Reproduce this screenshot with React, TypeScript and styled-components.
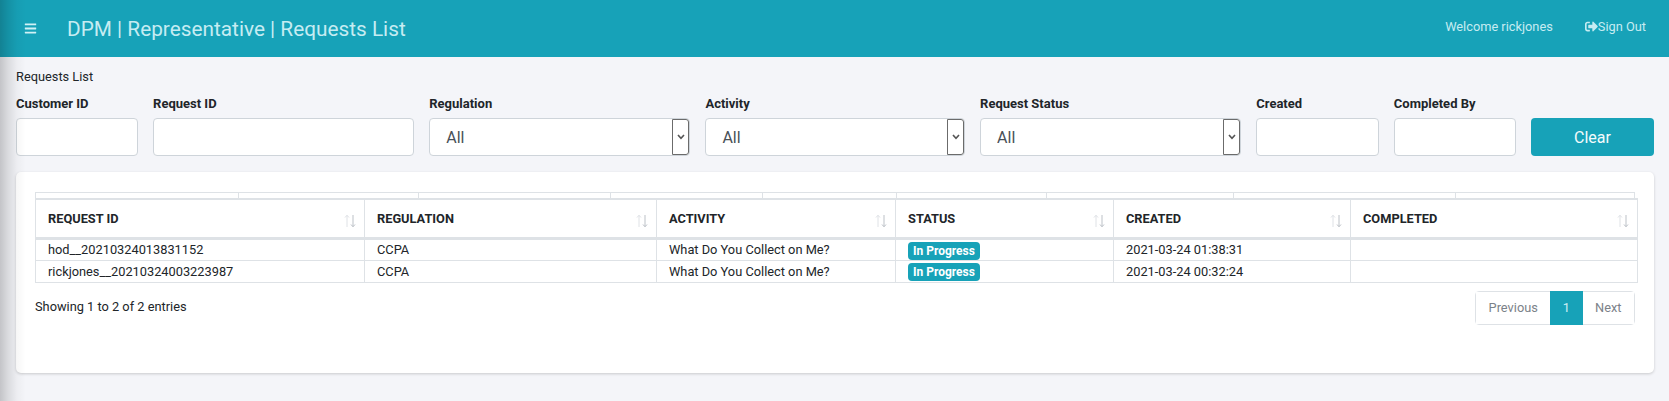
import React from 'react';
import styled, { createGlobalStyle } from 'styled-components';
import { FaBars, FaSignOutAlt } from 'react-icons/fa';

const columns = [
  { title: 'Request ID', width: 329 },
  { title: 'Regulation', width: 292 },
  { title: 'Activity', width: 239 },
  { title: 'Status', width: 218 },
  { title: 'Created', width: 237 },
  { title: 'Completed', width: 287 },
];

const rows = [
  { id: 'hod__20210324013831152', regulation: 'CCPA', activity: 'What Do You Collect on Me?', status: 'In Progress', created: '2021-03-24 01:38:31' },
  { id: 'rickjones__20210324003223987', regulation: 'CCPA', activity: 'What Do You Collect on Me?', status: 'In Progress', created: '2021-03-24 00:32:24' },
];

const GlobalStyle = createGlobalStyle`
  html, body {
    margin: 0;
    padding: 0;
    background: #f4f5f9;
    font-family: Roboto, "Liberation Sans", sans-serif;
    color: #212529;
  }
`;

const SortIcon = () => (
  <SortSvg width="12" height="14" viewBox="0 0 12 14" fill="none">
    <path d="M3 13V1.5M1 3.5 3 1.2l2 2.3" stroke="#dfe2e6" strokeWidth="1" />
    <path d="M9 1v11.5M7 10.5l2 2.3 2-2.3" stroke="#bcc1c7" strokeWidth="1" />
  </SortSvg>
);

const Field: React.FC<{ label: string; options?: boolean }> = ({ label, options }) => (
  <FieldBox>
    <FieldLabel>{label}</FieldLabel>
    {options ? (
      <SelectWrap>
        <Select defaultValue="All">
          <option>All</option>
        </Select>
        <SelectArrow>
          <svg width="8" height="6" viewBox="0 0 8 6" fill="none">
            <path d="M1 1l3 3.4L7 1" stroke="#555" strokeWidth="1.6" />
          </svg>
        </SelectArrow>
      </SelectWrap>
    ) : (
      <Input />
    )}
  </FieldBox>
);

const App: React.FC = () => {
  return (
    <Page>
      <GlobalStyle />
      <Header>
        <HeaderLeft>
          <MenuButton>
            <FaBars size={13} />
          </MenuButton>
          <Title>DPM | Representative | Requests List</Title>
        </HeaderLeft>
        <HeaderRight>
          <span>Welcome rickjones</span>
          <SignOut>
            <FaSignOutAlt size={13} />
            Sign Out
          </SignOut>
        </HeaderRight>
      </Header>

      <Main>
        <PageLabel>Requests List</PageLabel>
        <Filters>
          <Field label="Customer ID" />
          <Field label="Request ID" />
          <Field label="Regulation" options />
          <Field label="Activity" options />
          <Field label="Request Status" options />
          <Field label="Created" />
          <Field label="Completed By" />
          <ClearButton>Clear</ClearButton>
        </Filters>

        <Card>
          <GhostRow>
            {Array.from({ length: 9 }).map((_, i) => (
              <GhostCell key={i} />
            ))}
          </GhostRow>
          <Table>
            <colgroup>
              {columns.map((c) => (
                <col key={c.title} style={{ width: c.width }} />
              ))}
            </colgroup>
            <thead>
              <tr>
                {columns.map((c) => (
                  <Th key={c.title}>
                    {c.title}
                    <SortIcon />
                  </Th>
                ))}
              </tr>
            </thead>
            <tbody>
              {rows.map((r) => (
                <tr key={r.id}>
                  <Td>{r.id}</Td>
                  <Td>{r.regulation}</Td>
                  <Td>{r.activity}</Td>
                  <Td>
                    <Badge>{r.status}</Badge>
                  </Td>
                  <Td>{r.created}</Td>
                  <Td />
                </tr>
              ))}
            </tbody>
          </Table>
          <TableFooter>
            <Info>Showing 1 to 2 of 2 entries</Info>
            <Pagination>
              <PageLink>Previous</PageLink>
              <PageLink $active>1</PageLink>
              <PageLink>Next</PageLink>
            </Pagination>
          </TableFooter>
        </Card>
      </Main>
    </Page>
  );
};

export default App;

const Page = styled.div`
  position: relative;
  height: 401px;
  overflow: hidden;

  /* shadow of the collapsed sidebar */
  &::after {
    content: '';
    position: absolute;
    top: 0;
    bottom: 0;
    left: 0;
    width: 26px;
    background: linear-gradient(
      to right,
      rgba(0, 0, 0, 0.2),
      rgba(0, 0, 0, 0.11) 30%,
      rgba(0, 0, 0, 0.03) 65%,
      rgba(0, 0, 0, 0)
    );
    pointer-events: none;
  }
`;

const Header = styled.header`
  height: 57px;
  background: #17a2b8;
  display: flex;
  align-items: center;
  justify-content: space-between;
  padding: 0 23px 0 24px;
  box-sizing: border-box;
`;

const HeaderLeft = styled.div`
  display: flex;
  align-items: center;
`;

const MenuButton = styled.div`
  width: 43px;
  display: flex;
  align-items: center;
  color: #d1f1f5;
`;

const Title = styled.h1`
  margin: 0;
  font-size: 20.8px;
  font-weight: 400;
  color: #c6ecf2;
`;

const HeaderRight = styled.div`
  display: flex;
  align-items: center;
  gap: 32px;
  font-size: 12.8px;
  color: #c6ecf2;
  margin-bottom: 4px;
`;

const SignOut = styled.span`
  display: flex;
  align-items: center;
`;

const Main = styled.main`
  padding: 12px 15px 0 16px;
`;

const PageLabel = styled.div`
  font-size: 12.8px;
  line-height: 16px;
  margin-bottom: 11px;
`;

const Filters = styled.div`
  display: grid;
  grid-template-columns: 122fr 261fr 261fr 259.5fr 261fr 122.5fr 122fr 123fr;
  column-gap: 15px;
  align-items: end;
`;

const FieldBox = styled.div`
  display: flex;
  flex-direction: column;
`;

const FieldLabel = styled.label`
  font-size: 13px;
  font-weight: 700;
  line-height: 16px;
  margin-bottom: 6px;
`;

const Input = styled.input`
  height: 38px;
  width: 100%;
  box-sizing: border-box;
  background: #fff;
  border: 1px solid #ced4da;
  border-radius: 4px;
  outline: none;
`;

const SelectWrap = styled.div`
  position: relative;
  height: 38px;
`;

const Select = styled.select`
  appearance: none;
  width: 100%;
  height: 100%;
  box-sizing: border-box;
  padding: 0 16px;
  background: #fff;
  border: 1px solid #ced4da;
  border-radius: 4px;
  font-family: inherit;
  font-size: 16px;
  color: #495057;
  outline: none;
`;

const SelectArrow = styled.span`
  position: absolute;
  top: 1px;
  right: 1px;
  bottom: 1px;
  width: 17px;
  box-sizing: border-box;
  border: 1px solid #6b6b6b;
  border-radius: 0 3px 3px 0;
  display: flex;
  align-items: center;
  justify-content: center;
  background: #fff;
`;

const ClearButton = styled.button`
  height: 38px;
  background: #17a2b8;
  border: none;
  border-radius: 4px;
  font-family: inherit;
  font-size: 16px;
  color: #f3fbfc;
`;

const Card = styled.section`
  margin-top: 16px;
  height: 201px;
  box-sizing: border-box;
  padding: 20px 16px 0 19px;
  background: #fff;
  border-radius: 5px;
  box-shadow: 0 1px 3px rgba(0, 0, 0, 0.18);
`;

const GhostRow = styled.div`
  display: grid;
  grid-template-columns: 203fr 180fr 192fr 152fr 134fr 150fr 187fr 222fr 180fr;
  height: 6px;
  margin-right: 3px;
  border-top: 1px solid #dee2e6;
  box-sizing: border-box;
`;

const GhostCell = styled.div`
  border-left: 1px solid #dee2e6;

  &:last-child {
    border-right: 1px solid #dee2e6;
  }
`;

const Table = styled.table`
  width: 1602px;
  table-layout: fixed;
  border-collapse: collapse;
  font-size: 12.8px;
`;

const Th = styled.th`
  position: relative;
  height: 39px;
  padding: 0 12px;
  text-align: left;
  text-transform: uppercase;
  font-weight: 700;
  border: 1px solid #dee2e6;
  border-top-width: 2px;
  border-bottom-width: 3px;
  box-sizing: border-box;
`;

const SortSvg = styled.svg`
  position: absolute;
  right: 8px;
  top: 14px;
`;

const Td = styled.td`
  height: 22px;
  padding: 0 12px;
  border: 1px solid #dee2e6;
  box-sizing: border-box;
  vertical-align: middle;
`;

const Badge = styled.span`
  display: inline-block;
  height: 18px;
  line-height: 18px;
  padding: 0 5px;
  margin-top: 2px;
  vertical-align: top;
  border-radius: 4px;
  background: #17a2b8;
  color: #fff;
  font-size: 12px;
  font-weight: 700;
`;

const TableFooter = styled.div`
  display: flex;
  justify-content: space-between;
  align-items: flex-start;
  margin: 8px 3px 0 0;
`;

const Info = styled.div`
  font-size: 12.8px;
  line-height: 16px;
  margin-top: 8px;
`;

const Pagination = styled.nav`
  display: flex;
  height: 34px;
  box-sizing: border-box;
  border: 1px solid #dee2e6;
  border-radius: 4px;
`;

const PageLink = styled.a<{ $active?: boolean }>`
  display: flex;
  align-items: center;
  padding: 0 12.5px;
  font-size: 12.8px;
  color: ${({ $active }) => ($active ? '#cdeef3' : '#7b8289')};
  background: ${({ $active }) => ($active ? '#17a2b8' : '#fff')};
  margin: ${({ $active }) => ($active ? '-1px 0' : '0')};
`;
